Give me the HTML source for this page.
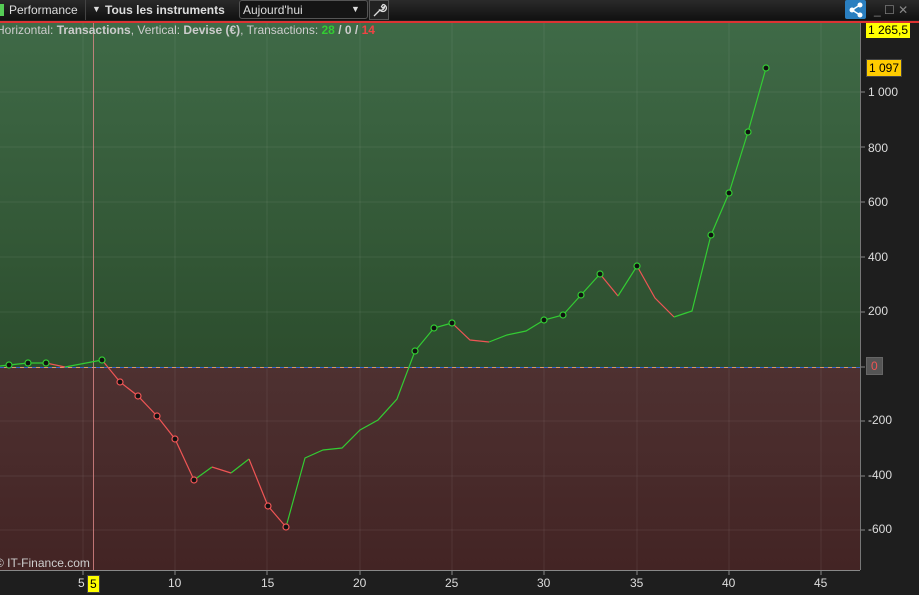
<!DOCTYPE html>
<html><head><meta charset="utf-8"><style>
body{margin:0;width:919px;height:595px;background:#1e1e1e;overflow:hidden;font-family:"Liberation Sans",sans-serif;position:relative}
.tb{position:absolute;left:0;top:0;width:919px;height:20px;background:linear-gradient(#2a2a2a,#111);color:#ddd;font-size:12px}
.t{position:absolute;top:3px}
.ax{position:absolute;color:#ddd;font-size:12px}
</style></head><body>
<div class="tb">
<div style="position:absolute;left:0;top:4px;width:4px;height:12px;background:#5c5"></div>
<span class="t" style="left:9px">Performance</span>
<div style="position:absolute;left:85px;top:0;width:1px;height:20px;background:#444"></div>
<span class="t" style="left:92px;font-size:9px;top:4px">▼</span>
<span class="t" style="left:105px;font-weight:bold">Tous les instruments</span>
<div style="position:absolute;left:239px;top:0;width:127px;height:17px;border:1px solid #555;border-radius:3px;background:#151515"></div>
<span class="t" style="left:243px">Aujourd'hui</span>
<span class="t" style="left:351px;font-size:9px;top:4px">▼</span>
<div style="position:absolute;left:369px;top:0;width:18px;height:18px;border:1px solid #555;background:#222"><svg width="18" height="18"><path d="M4 15L10 9M10 9a3.5 3.5 0 1 0 3-5.5l-1.5 2 1 1.5 2 -1.5a3.5 3.5 0 0 1 -4.5 3.5z" fill="none" stroke="#ddd" stroke-width="1.3"/></svg></div>
<div style="position:absolute;left:845px;top:0;width:21px;height:19px;background:#2a7fc0;border-radius:2px"><svg width="21" height="19"><circle cx="7" cy="10" r="2.5" fill="#fff"/><circle cx="15" cy="5" r="2.5" fill="#fff"/><circle cx="15" cy="15" r="2.5" fill="#fff"/><path d="M7 10L15 5M7 10L15 15" stroke="#fff" stroke-width="1.5"/></svg></div>
<span class="t" style="left:874px;color:#888">_ ☐ ✕</span>
</div>
<svg style="position:absolute;left:0;top:0" width="919" height="595">
<defs>
<linearGradient id="g" x1="0" y1="0" x2="0" y2="1"><stop offset="0" stop-color="#3f6a47"/><stop offset="1" stop-color="#2c4d2d"/></linearGradient>
<linearGradient id="r" x1="0" y1="0" x2="0" y2="1"><stop offset="0" stop-color="#4e3131"/><stop offset="1" stop-color="#432424"/></linearGradient>
</defs>
<rect x="0" y="21" width="919" height="2" fill="#d33"/>
<rect x="0" y="23" width="860" height="344" fill="url(#g)"/>
<rect x="0" y="367" width="860" height="203" fill="url(#r)"/>
<g stroke="#fff" stroke-opacity="0.07">
<path d="M83 23V570M175 23V570M267 23V570M360 23V570M452 23V570M544 23V570M637 23V570M729 23V570M821 23V570"/>
<path d="M0 92H860M0 147H860M0 202H860M0 257H860M0 312H860M0 421H860M0 476H860M0 530H860"/>
</g>
<line x1="860.5" y1="23" x2="860.5" y2="570" stroke="#777"/>
<line x1="0" y1="570.5" x2="860" y2="570.5" stroke="#888"/>
<line x1="0" y1="367.5" x2="860" y2="367.5" stroke="#36c" stroke-dasharray="4 4"/>
<line x1="4" y1="367.5" x2="860" y2="367.5" stroke="#d96" stroke-dasharray="4 4"/>
<line x1="93.5" y1="23" x2="93.5" y2="570" stroke="#d88" stroke-opacity="0.8"/>
<g fill="none" stroke-width="1.2">
<polyline stroke="#3c3" points="0,366 9,365 28,363 46,363"/>
<polyline stroke="#e55" points="46,363 65,367"/>
<polyline stroke="#3c3" points="65,367 102,360"/>
<polyline stroke="#e55" points="102,360 120,382 138,396 157,416 175,439 194,480"/>
<polyline stroke="#3c3" points="194,480 212,467"/>
<polyline stroke="#e55" points="212,467 231,473"/>
<polyline stroke="#3c3" points="231,473 249,459"/>
<polyline stroke="#e55" points="249,459 268,506 286,527"/>
<polyline stroke="#3c3" points="286,527 305,458 323,450 342,448 360,430 378,420 397,399 415,351 434,328 452,323"/>
<polyline stroke="#e55" points="452,323 470,340 489,342"/>
<polyline stroke="#3c3" points="489,342 507,335 526,331 544,320 563,315 581,295 600,274"/>
<polyline stroke="#e55" points="600,274 618,296"/>
<polyline stroke="#3c3" points="618,296 637,266"/>
<polyline stroke="#e55" points="637,266 655,298 674,317"/>
<polyline stroke="#3c3" points="674,317 692,311 711,235 729,193 748,132 766,68"/>
</g>
<g fill="#111" stroke-width="1.2" stroke="#3c3">
<circle cx="9" cy="365" r="3"/><circle cx="28" cy="363" r="3"/><circle cx="46" cy="363" r="3"/><circle cx="102" cy="360" r="3"/>
<circle cx="415" cy="351" r="3"/><circle cx="434" cy="328" r="3"/><circle cx="452" cy="323" r="3"/><circle cx="544" cy="320" r="3"/><circle cx="563" cy="315" r="3"/><circle cx="581" cy="295" r="3"/><circle cx="600" cy="274" r="3"/><circle cx="637" cy="266" r="3"/><circle cx="711" cy="235" r="3"/><circle cx="729" cy="193" r="3"/><circle cx="748" cy="132" r="3"/><circle cx="766" cy="68" r="3"/>
</g>
<g fill="#111" stroke-width="1.2" stroke="#e55">
<circle cx="120" cy="382" r="3"/><circle cx="138" cy="396" r="3"/><circle cx="157" cy="416" r="3"/><circle cx="175" cy="439" r="3"/><circle cx="194" cy="480" r="3"/><circle cx="268" cy="506" r="3"/><circle cx="286" cy="527" r="3"/>
</g>
<g stroke="#888"><path d="M861 92h4M861 147h4M861 202h4M861 257h4M861 312h4M861 367h4M861 421h4M861 476h4M861 530h4M83 571v4M175 571v4M267 571v4M360 571v4M452 571v4M544 571v4M637 571v4M729 571v4M821 571v4"/></g>
</svg>
<div style="position:absolute;left:-4px;top:23px;font-size:12px;color:#ccc;white-space:nowrap">Horizontal: <b>Transactions</b>, Vertical: <b>Devise (€)</b>, Transactions: <b style="color:#3c3">28</b> <b>/ 0 /</b> <b style="color:#e44">14</b></div>
<div style="position:absolute;left:-5px;top:556px;font-size:12px;color:#ccc">© IT-Finance.com</div>
<div class="ax" style="left:868px;top:85px">1 000</div>
<div class="ax" style="left:868px;top:141px">800</div>
<div class="ax" style="left:868px;top:195px">600</div>
<div class="ax" style="left:868px;top:250px">400</div>
<div class="ax" style="left:868px;top:304px">200</div>
<div class="ax" style="left:868px;top:413px">-200</div>
<div class="ax" style="left:868px;top:468px">-400</div>
<div class="ax" style="left:868px;top:522px">-600</div>
<div style="position:absolute;left:866px;top:23px;background:#ff0;color:#000;font-size:12px;padding:0 2px;height:15px;line-height:15px">1 265,5</div>
<div style="position:absolute;left:866px;top:59px;background:#fc0;color:#000;font-size:12px;padding:0 2px;height:16px;line-height:16px;border:1px solid #444">1 097</div>
<div style="position:absolute;left:866px;top:357px;background:#555;color:#e55;font-size:12px;padding:1px 4px;border:1px solid #666">0</div>
<div class="ax" style="left:78px;top:576px">5</div>
<div style="position:absolute;left:87px;top:575px;background:#ff0;color:#000;font-size:12px;padding:0 2px;height:16px;line-height:16px;border:1px solid #444">5</div>
<div class="ax" style="left:168px;top:576px">10</div>
<div class="ax" style="left:261px;top:576px">15</div>
<div class="ax" style="left:353px;top:576px">20</div>
<div class="ax" style="left:445px;top:576px">25</div>
<div class="ax" style="left:537px;top:576px">30</div>
<div class="ax" style="left:630px;top:576px">35</div>
<div class="ax" style="left:722px;top:576px">40</div>
<div class="ax" style="left:814px;top:576px">45</div>
</body></html>
